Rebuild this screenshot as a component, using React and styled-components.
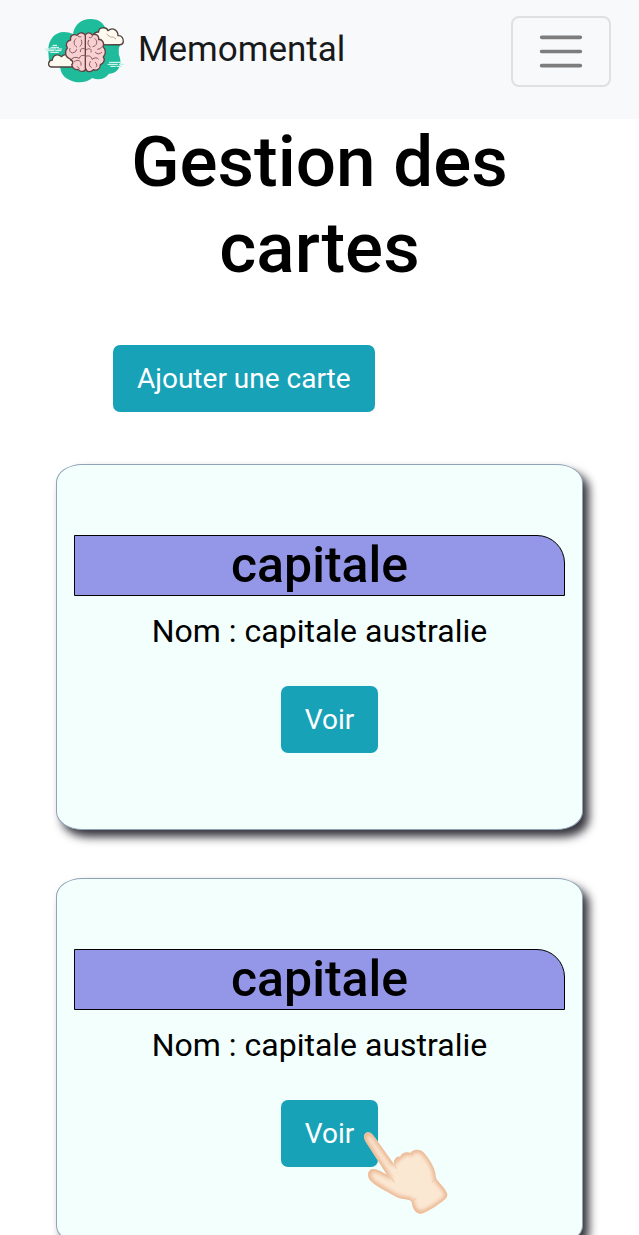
import React from "react";
import styled, { createGlobalStyle } from "styled-components";

const GlobalStyle = createGlobalStyle`
  *, *::before, *::after { box-sizing: border-box; }
  body {
    margin: 0;
    background: #fff;
    color: #000;
    font-family: Roboto, "Liberation Sans", sans-serif;
    overflow-x: hidden;
  }
  h1, h2, p { margin: 0; }
`;

const Navbar = styled.header`
  display: flex;
  align-items: flex-start;
  justify-content: space-between;
  padding: 16px 28px 32px 44px;
  background: #f8f9fa;
`;

const Brand = styled.a`
  display: flex;
  align-items: center;
  gap: 12px;
  color: #18191a;
  font-size: 35px;
  line-height: 68px;
  text-decoration: none;
`;

const Toggler = styled.button`
  display: flex;
  padding: 7px 21px;
  border: 2px solid #dfe0e1;
  border-radius: 8px;
  background: transparent;
`;

const PageTitle = styled.h1`
  padding: 0 56px;
  font-size: 71px;
  font-weight: 500;
  line-height: 86px;
  text-align: center;
`;

const Toolbar = styled.div`
  padding: 54px 113px 52px;
`;

const Button = styled.button`
  padding: 12px 24px;
  border: 0;
  border-radius: 7px;
  background: #18a2b8;
  color: #fff;
  font-family: inherit;
  font-size: 28px;
  line-height: 43px;
`;

const CardList = styled.main`
  display: flex;
  flex-direction: column;
  gap: 48px;
  padding: 0 56px 48px;
`;

const Card = styled.article`
  display: flex;
  flex-direction: column;
  align-items: center;
  padding: 70px 17px 76px;
  border: 1px solid #8fa2b6;
  border-radius: 5%;
  background: #f2fffc;
  box-shadow: 6px 7px 10px #36353d;
`;

const CardTitle = styled.h2`
  align-self: stretch;
  border: 1px solid #000;
  border-top-right-radius: 28px;
  background: #9496e7;
  font-size: 50px;
  font-weight: 500;
  line-height: 59px;
  text-align: center;
`;

const CardText = styled.p`
  padding: 11px 0 31px;
  font-size: 32px;
  line-height: 48px;
`;

const CardAction = styled.div`
  position: relative;
  margin-left: 20px;
`;

const Pointer = styled.svg`
  position: absolute;
  top: 20px;
  left: 69px;
  pointer-events: none;
`;

function BrainLogo() {
  return (
    <svg width="82" height="66" viewBox="24 21 246 198" aria-hidden="true">
      <path fill="#1fbc9c" d="M37 126C35 92 54 66 84 66Q98 66 111 72C115 44 136 27 163 27C190 27 207 41 210 62L253 104Q246 114 249 135C261 164 246 190 219 191C207 207 187 212 169 204C153 218 122 222 101 210C85 203 75 191 73 174L39 154Z" />
      <g fill="#fffaf0" stroke="#51423d" strokeWidth="4" strokeLinejoin="round">
        <path d="M178 105C165 79 172 65 188 66C187 51 211 49 216 62C230 50 246 60 246 77C257 76 263 85 262 96Q259 106 248 104Z" />
        <path d="M47 171C33 169 36 151 49 150C51 134 67 130 76 140C88 128 104 136 105 151C114 152 116 165 111 171Z" />
      </g>
      <path fill="#f8d0d1" stroke="#604044" strokeWidth="4" strokeLinejoin="round" d="M148 75C139 64 127 68 124 76C110 69 101 80 104 90C91 92 88 105 94 114C84 125 89 142 99 145C113 150 112 160 107 164C110 178 120 180 126 178C135 188 148 185 149 175C151 187 165 188 172 179C185 184 194 174 193 164C204 160 208 148 202 141C212 130 208 115 201 111C207 98 197 86 188 89C190 77 179 69 169 75C163 66 152 67 148 75Z" />
      <path fill="none" stroke="#604044" strokeWidth="4" d="M148 75V175" />
      <path fill="none" stroke="#8c5c61" strokeWidth="3" strokeLinecap="round" d="M124 76Q126 83 135 81M120 86C110 94 114 106 122 111M136 90Q141 103 132 109M102 115Q97 125 109 129Q121 127 122 119M145 116Q132 112 133 125M147 137Q133 133 130 145Q115 138 107 147M115 155C126 146 138 153 135 166M124 170L130 176M169 75Q170 85 160 83M158 91Q151 104 163 111M177 86C186 94 184 107 171 110M151 119C163 112 168 119 165 126M185 118Q195 118 197 111M197 127Q188 137 178 127M149 139C162 134 167 142 168 148Q181 139 187 147M163 155Q155 167 166 172M178 157Q187 167 180 171" />
      <path fill="none" stroke="#baa994" strokeWidth="3" d="M212 72L223 81Q232 78 240 87" />
      <g stroke="#effffb" strokeWidth="3" strokeLinecap="round">
        <path d="M51 106H62M45 112H68M29 117H60M65 117H77M35 122H54M59 122H75M44 127H67M220 157H252M216 163H244M250 163H262M224 169H238M243 169H256" />
      </g>
      <path stroke="#b9ebe1" strokeWidth="3" strokeLinecap="round" d="M28 117H37M32 122H38M253 163H263M251 169H257" />
    </svg>
  );
}

function MenuIcon() {
  return (
    <svg width="54" height="53" viewBox="0 0 30 30" aria-hidden="true">
      <path d="M4 7h22M4 15h22M4 23h22" stroke="#7d7d7d" strokeWidth="2" strokeLinecap="round" />
    </svg>
  );
}

const HAND =
  "M52 37C61 34 69 44 76 54L132 133C130 123 137 108 150 110C156 98 170 94 181 99C193 84 215 87 225 102C241 121 257 148 257 169C256 181 286 202 292 222C294 232 284 240 274 247C253 262 231 277 213 281C198 282 186 264 186 248Q185 242 177 240C162 237 147 237 135 229C108 212 67 194 57 176C50 161 56 148 69 147C83 147 98 158 111 164L47 65C40 53 41 40 52 37Z";

function PointingHand() {
  return (
    <Pointer width="110" height="100" viewBox="0 0 330 300" aria-hidden="true">
      <defs>
        <clipPath id="hand-shape"><path d={HAND} /></clipPath>
        <filter id="hand-shade" x="-10%" y="-10%" width="120%" height="120%">
          <feGaussianBlur stdDeviation="6" />
        </filter>
      </defs>
      <path d={HAND} fill="#fbe8d3" />
      <g clipPath="url(#hand-shape)">
        <path d={HAND} fill="none" stroke="#e8ad86" strokeWidth="14" filter="url(#hand-shade)" />
      </g>
      <path d="M111 164Q126 172 133 187M132 133L139 145M150 110Q145 116 147 125M181 99L187 106M257 169Q255 180 247 187M186 248Q190 237 198 235" fill="none" stroke="#edc6a5" strokeWidth="3" strokeLinecap="round" />
    </Pointer>
  );
}

const cards = [
  { id: 1, title: "capitale", name: "capitale australie" },
  { id: 2, title: "capitale", name: "capitale australie", pointed: true },
];

export default function App() {
  return (
    <>
      <GlobalStyle />
      <Navbar>
        <Brand href="#">
          <BrainLogo />
          Memomental
        </Brand>
        <Toggler type="button" aria-label="Menu">
          <MenuIcon />
        </Toggler>
      </Navbar>
      <PageTitle>Gestion des cartes</PageTitle>
      <Toolbar>
        <Button type="button">Ajouter une carte</Button>
      </Toolbar>
      <CardList>
        {cards.map((card) => (
          <Card key={card.id}>
            <CardTitle>{card.title}</CardTitle>
            <CardText>Nom : {card.name}</CardText>
            <CardAction>
              <Button type="button">Voir</Button>
              {card.pointed && <PointingHand />}
            </CardAction>
          </Card>
        ))}
      </CardList>
    </>
  );
}
